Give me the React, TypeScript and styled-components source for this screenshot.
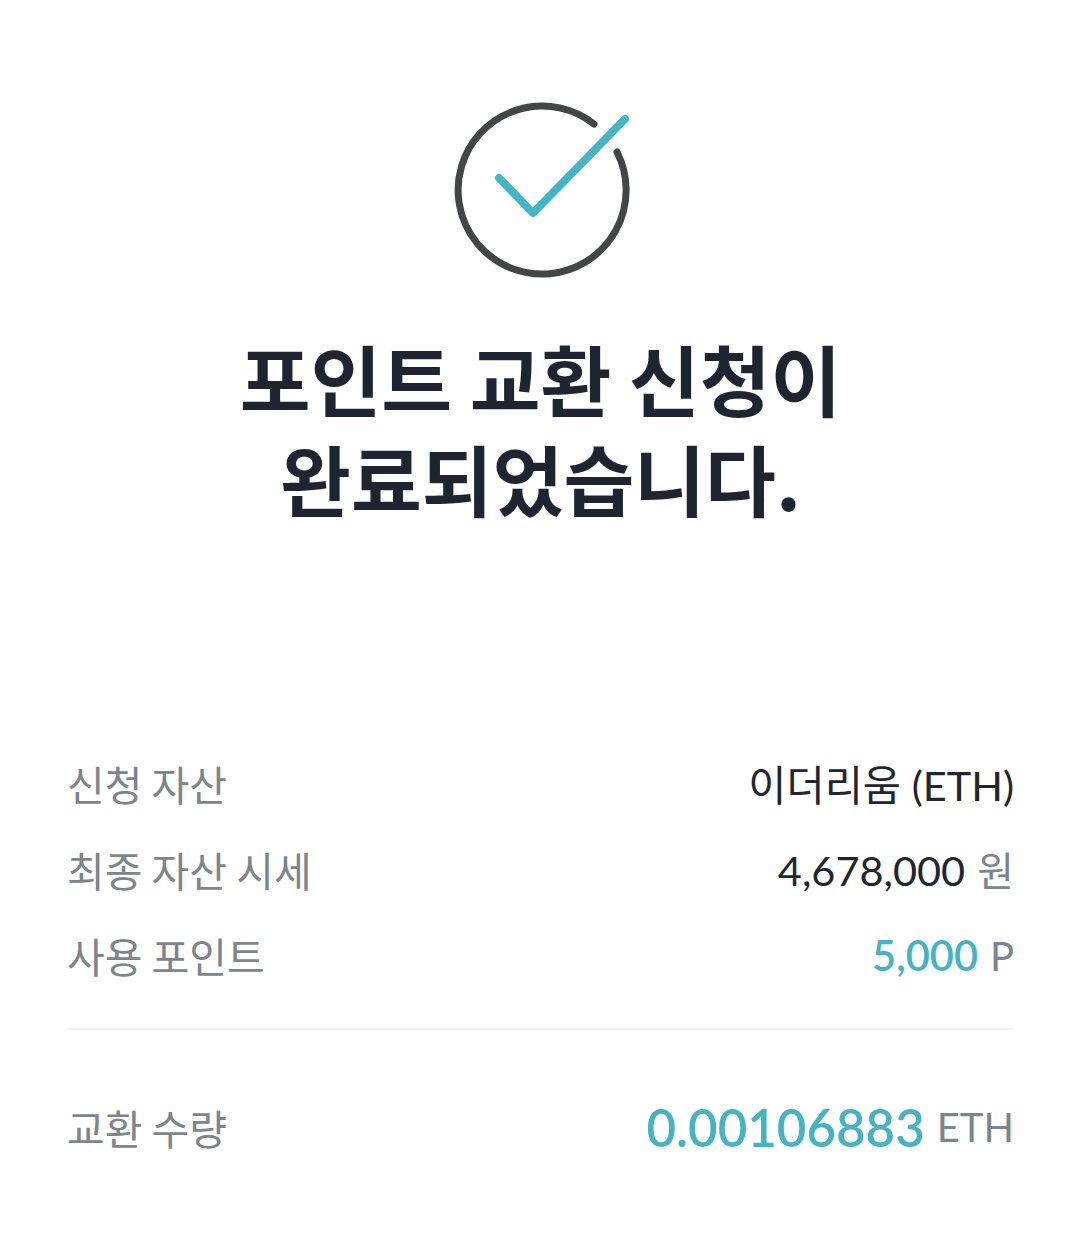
import React from "react";
import styled, { createGlobalStyle } from "styled-components";

const Global = createGlobalStyle`
  html, body { margin: 0; padding: 0; background: #fff; }
  body { font-family: "Lato", "Noto Sans CJK KR", sans-serif; }
`;

const Page = styled.main`
  width: 1080px;
  height: 1235px;
  box-sizing: border-box;
  padding: 100px 66px 0 67px;
  display: flex;
  flex-direction: column;
  overflow: hidden;
  background: #fff;
`;

const IconWrap = styled.div`
  display: flex;
  justify-content: center;
  height: 180px;
`;

const Title = styled.h1`
  margin: 48px 0 0;
  text-align: center;
  font-family: "Noto Sans CJK KR", sans-serif;
  font-weight: 700;
  font-size: 77px;
  line-height: 100px;
  letter-spacing: 0;
  color: #1e2530;
`;

const Rows = styled.section`
  margin-top: 212px;
  display: flex;
  flex-direction: column;
`;

const Row = styled.div`
  display: flex;
  justify-content: space-between;
  align-items: center;
  height: 86px;
`;

const Label = styled.span`
  font-family: "Noto Sans CJK KR", sans-serif;
  font-size: 41px;
  font-weight: 400;
  color: #7d858c;
`;

const Value = styled.span<{ $center?: boolean }>`
  display: flex;
  align-items: ${p => (p.$center ? "center" : "baseline")};
  gap: 12px;
  color: #20262e;
`;

const Amount = styled.span<{ $accent?: boolean; $large?: boolean }>`
  font-family: "Lato", "Noto Sans CJK KR", sans-serif;
  font-size: ${p => (p.$large ? 51 : 41.5)}px;
  font-weight: ${p => (p.$accent ? 600 : 400)};
  color: ${p => (p.$accent ? "#45b3c4" : "#20262e")};
`;

const Unit = styled.span`
  font-family: "Lato", "Noto Sans CJK KR", sans-serif;
  font-size: 40px;
  color: #7d858c;
`;

const Divider = styled.hr`
  margin: 30px 0 0;
  border: 0;
  height: 2px;
  background: #f0f2f3;
`;

const Total = styled(Row)`
  margin-top: 54px;
`;

const CheckIcon = () => (
  <svg width="180" height="180" viewBox="0 0 180 180" fill="none">
    <path d="M143 24 A84 84 0 1 0 166 52" stroke="#434547" strokeWidth="7" strokeLinecap="round" />
    <path d="M48 78 L82 113 L174 19" stroke="#45b5c6" strokeWidth="8" strokeLinecap="round" strokeLinejoin="round" />
  </svg>
);

export default function App() {
  return (
    <Page>
      <Global />
      <IconWrap><CheckIcon /></IconWrap>
      <Title>포인트 교환 신청이<br />완료되었습니다.</Title>
      <Rows>
        <Row><Label>신청 자산</Label><Value><Amount>이더리움 (ETH)</Amount></Value></Row>
        <Row><Label>최종 자산 시세</Label><Value><Amount>4,678,000</Amount><Unit>원</Unit></Value></Row>
        <Row><Label>사용 포인트</Label><Value><Amount $accent>5,000</Amount><Unit>P</Unit></Value></Row>
      </Rows>
      <Divider />
      <Total><Label>교환 수량</Label><Value $center><Amount $accent $large>0.00106883</Amount><Unit>ETH</Unit></Value></Total>
    </Page>
  );
}
